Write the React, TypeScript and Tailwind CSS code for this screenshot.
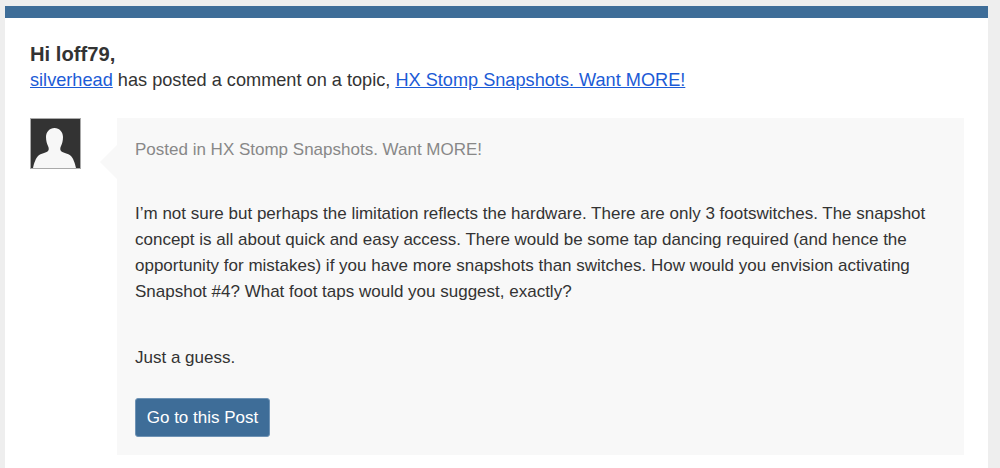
export default function App() {
  return (
    <div className="h-[468px] overflow-hidden bg-[#eeeeee] pt-[6px] pl-[5px] pr-3 font-['Liberation_Sans',Arial,sans-serif] text-[#333333]">
      <div className="h-[462px] w-[983px] bg-white">
        <div className="h-3 bg-[#3e6d98]" />
        <div className="pt-[24px] pl-[25px] pr-[24px]">
          <p className="text-[20.2px] leading-6 font-bold">Hi loff79,</p>
          <p className="mt-px text-[18.17px] leading-[27px]">
            <a href="#" className="text-[#1c5bd6] underline">silverhead</a> has posted a comment on a topic,{' '}
            <a href="#" className="text-[#1c5bd6] underline">HX Stomp Snapshots. Want MORE!</a>
          </p>
          <div className="mt-[24px] flex">
            <div className="h-[51px] w-[51px] shrink-0 border border-[#aaaaaa] bg-[#333333]">
              <svg viewBox="0 0 49 49" className="block h-full w-full">
                <path
                  d="M23.500 9c-5 0-8.500 4-8.500 9 0 4 1 7 2 9 1 2 1 4 0 5-2 2-7 2-10 5-2 2-4 7-5 12h43c-1-5-3-10-5-12-3-3-8-3-10-5-1-1-1-3 0-5 1-2 2-5 2-9 0-5-3.500-9-8.500-9z"
                  fill="#f7f7f7"
                />
              </svg>
            </div>
            <div className="relative ml-[36px] h-[337px] w-[848px] bg-[#f8f8f8] px-[18px] pt-[19px] text-[17px] leading-[26px]">
              <div className="absolute top-[27px] -left-[17px] h-0 w-0 border-y-[17px] border-r-[17px] border-y-transparent border-r-[#f8f8f8]" />
              <p className="text-[#888888]">Posted in HX Stomp Snapshots. Want MORE!</p>
              <p className="mt-[38px]">
                I’m not sure but perhaps the limitation reflects the hardware. There are only 3 footswitches. The snapshot concept is all about quick and easy access. There would be some tap dancing required (and hence the opportunity for mistakes) if you have more snapshots than switches. How would you envision activating Snapshot #4? What foot taps would you suggest, exactly?
              </p>
              <p className="mt-[40px]">Just a guess.</p>
              <a href="#" className="mt-[27px] block h-[39px] w-[135px] rounded-[3px] border border-[#6f93b5] bg-[#3e6d98] text-center leading-[37px] text-white">
                Go to this Post
              </a>
            </div>
          </div>
        </div>
      </div>
    </div>
  )
}
